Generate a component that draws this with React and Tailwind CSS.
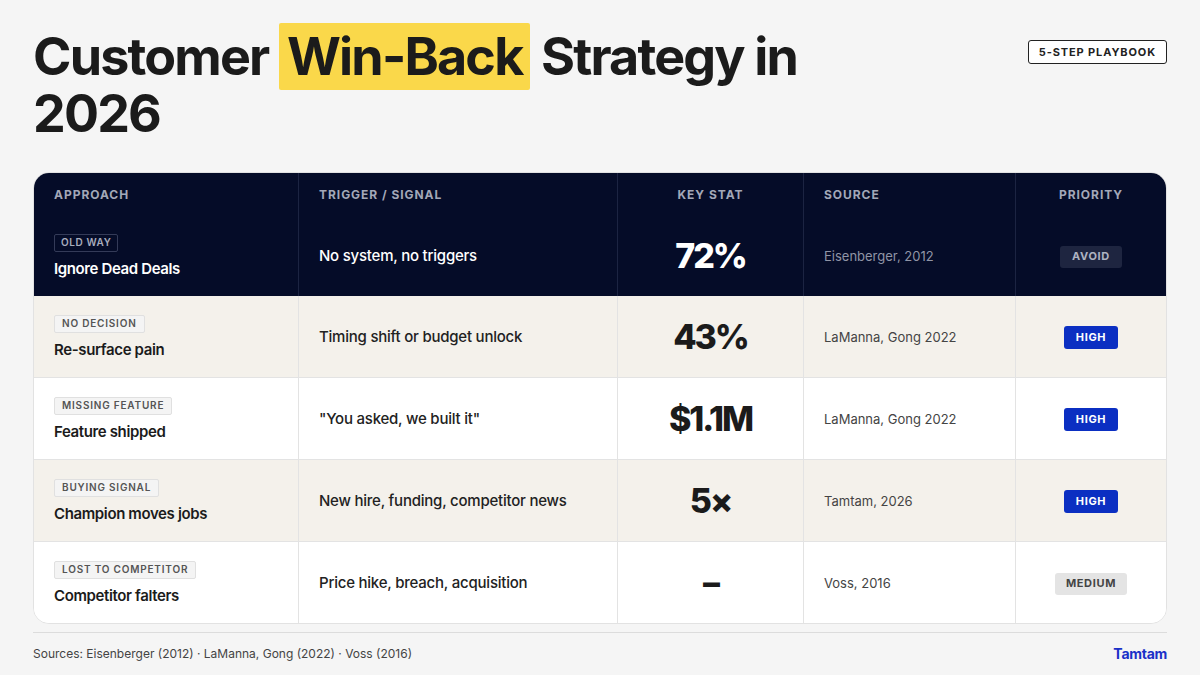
import React from "react";

const rows = [
  { tag: "NO DECISION", title: "Re-surface pain", trigger: "Timing shift or budget unlock", stat: "43%", source: "LaManna, Gong 2022", pri: "HIGH", bg: "bg-[#f4f1eb]" },
  { tag: "MISSING FEATURE", title: "Feature shipped", trigger: "\"You asked, we built it\"", stat: "$1.1M", source: "LaManna, Gong 2022", pri: "HIGH", bg: "bg-white" },
  { tag: "BUYING SIGNAL", title: "Champion moves jobs", trigger: "New hire, funding, competitor news", stat: "5×", source: "Tamtam, 2026", pri: "HIGH", bg: "bg-[#f4f1eb]" },
  { tag: "LOST TO COMPETITOR", title: "Competitor falters", trigger: "Price hike, breach, acquisition", stat: "–", source: "Voss, 2016", pri: "MEDIUM", bg: "bg-white" },
];

function Priority({ p }) {
  if (p === "HIGH")
    return <span className="inline-flex items-center h-[23px] px-[12px] rounded-[3px] bg-[#0b2fc2] text-white text-[11px] font-bold tracking-[0.06em]">HIGH</span>;
  if (p === "MEDIUM")
    return <span className="inline-flex items-center h-[22px] px-[11px] rounded-[3px] bg-[#e4e4e4] text-[#444] text-[11px] font-bold tracking-[0.06em]">MEDIUM</span>;
  return <span className="inline-flex items-center h-[22px] px-[12px] rounded-[3px] bg-[#1e2540] text-[#aeb3c2] text-[11px] font-bold tracking-[0.06em]">AVOID</span>;
}

export default function App() {
  return (
    <div className="w-[1200px] h-[675px] bg-[#f5f5f5] overflow-hidden text-[#1b1b1b]" style={{ fontFamily: "Inter, 'Noto Sans', sans-serif" }}>
      <div className="px-[33px]">
        <div className="flex justify-between items-start pt-[28px]">
          <h1 className="text-[52px] leading-[57px] font-bold tracking-[-0.035em] text-[#1b1b1b] w-[800px]">
            Customer{" "}
            <span className="inline-block bg-[#fad84a] rounded-[2px] px-[8px] py-[5px] -my-[5px] leading-[57px]">Win-Back</span>{" "}
            Strategy in 2026
          </h1>
          <div className="mt-[12px] h-[24px] px-[10px] flex items-center border-[1.5px] border-[#222] rounded-[3px] bg-white text-[11px] font-bold tracking-[0.08em] text-[#222]">
            5-STEP PLAYBOOK
          </div>
        </div>

        <div className="mt-[30px] rounded-[16px] overflow-hidden border border-[#e2e2e2] bg-white">
          <div className="grid grid-cols-[265px_319px_186px_212px_1fr] bg-[#050c28]">
            <div className="h-[42px] flex items-center pl-[20px] pt-[2px] border-r border-[#1c2442] text-[12px] font-bold tracking-[0.08em] text-[#a3a8b8]">APPROACH</div>
            <div className="h-[42px] flex items-center pl-[20px] pt-[2px] border-r border-[#1c2442] text-[12px] font-bold tracking-[0.08em] text-[#a3a8b8]">TRIGGER / SIGNAL</div>
            <div className="h-[42px] flex items-center justify-center pt-[2px] border-r border-[#1c2442] text-[12px] font-bold tracking-[0.08em] text-[#a3a8b8]">KEY STAT</div>
            <div className="h-[42px] flex items-center pl-[20px] pt-[2px] border-r border-[#1c2442] text-[12px] font-bold tracking-[0.08em] text-[#a3a8b8]">SOURCE</div>
            <div className="h-[42px] flex items-center justify-center pt-[2px] text-[12px] font-bold tracking-[0.08em] text-[#a3a8b8]">PRIORITY</div>

            <div className="h-[81px] flex flex-col justify-center pl-[20px] pt-[3px] border-r border-[#1c2442]">
              <span className="self-start h-[18px] px-[6px] flex items-center border border-[#343b58] rounded-[2px] text-[10px] font-semibold tracking-[0.06em] text-[#a8adbd]">OLD WAY</span>
              <span className="mt-[6px] text-[15px] font-semibold tracking-[-0.025em] text-white">Ignore Dead Deals</span>
            </div>
            <div className="h-[81px] flex items-center pl-[20px] pt-[2px] border-r border-[#1c2442] text-[15px] font-medium tracking-[-0.015em] text-white">No system, no triggers</div>
            <div className="h-[81px] flex items-center justify-center border-r border-[#1c2442] text-[34px] font-extrabold tracking-[-0.06em] text-white">72%</div>
            <div className="h-[81px] flex items-center pl-[20px] pt-[2px] border-r border-[#1c2442] text-[13px] text-[#9095a6]">Eisenberger, 2012</div>
            <div className="h-[81px] flex items-center justify-center pt-[2px]"><Priority p="AVOID" /></div>
          </div>

          {rows.map((r, i) => (
            <div key={i} className={`grid grid-cols-[265px_319px_186px_212px_1fr] ${r.bg} ${i > 0 ? "border-t border-[#e3e3e3]" : ""}`}>
              <div className="h-[81px] flex flex-col justify-center pl-[20px] pt-[3px] border-r border-[#e3e3e3]">
                <span className="self-start h-[18px] px-[7px] flex items-center border border-[#e0e0e0] bg-[#f4f4f4] rounded-[2px] text-[10px] font-semibold tracking-[0.08em] text-[#555]">{r.tag}</span>
                <span className="mt-[6px] text-[15px] font-semibold tracking-[-0.025em] text-[#1b1b1b]">{r.title}</span>
              </div>
              <div className="h-[81px] flex items-center pl-[20px] pt-[2px] border-r border-[#e3e3e3] text-[15px] font-medium tracking-[-0.015em] text-[#222]">{r.trigger}</div>
              <div className="h-[81px] flex items-center justify-center border-r border-[#e3e3e3] text-[34px] font-extrabold tracking-[-0.06em] text-[#1b1b1b]">{r.stat}</div>
              <div className="h-[81px] flex items-center pl-[20px] pt-[2px] border-r border-[#e3e3e3] text-[13px] text-[#444]">{r.source}</div>
              <div className="h-[81px] flex items-center justify-center pt-[2px]"><Priority p={r.pri} /></div>
            </div>
          ))}
        </div>

        <div className="mt-[8px] border-t border-[#dcdcdc] flex justify-between items-center pt-[10px]">
          <span className="text-[12px] text-[#444]">Sources: Eisenberger (2012) · LaManna, Gong (2022) · Voss (2016)</span>
          <span className="text-[14px] font-bold tracking-[-0.02em] text-[#1a30c8]">Tamtam</span>
        </div>
      </div>
    </div>
  );
}
